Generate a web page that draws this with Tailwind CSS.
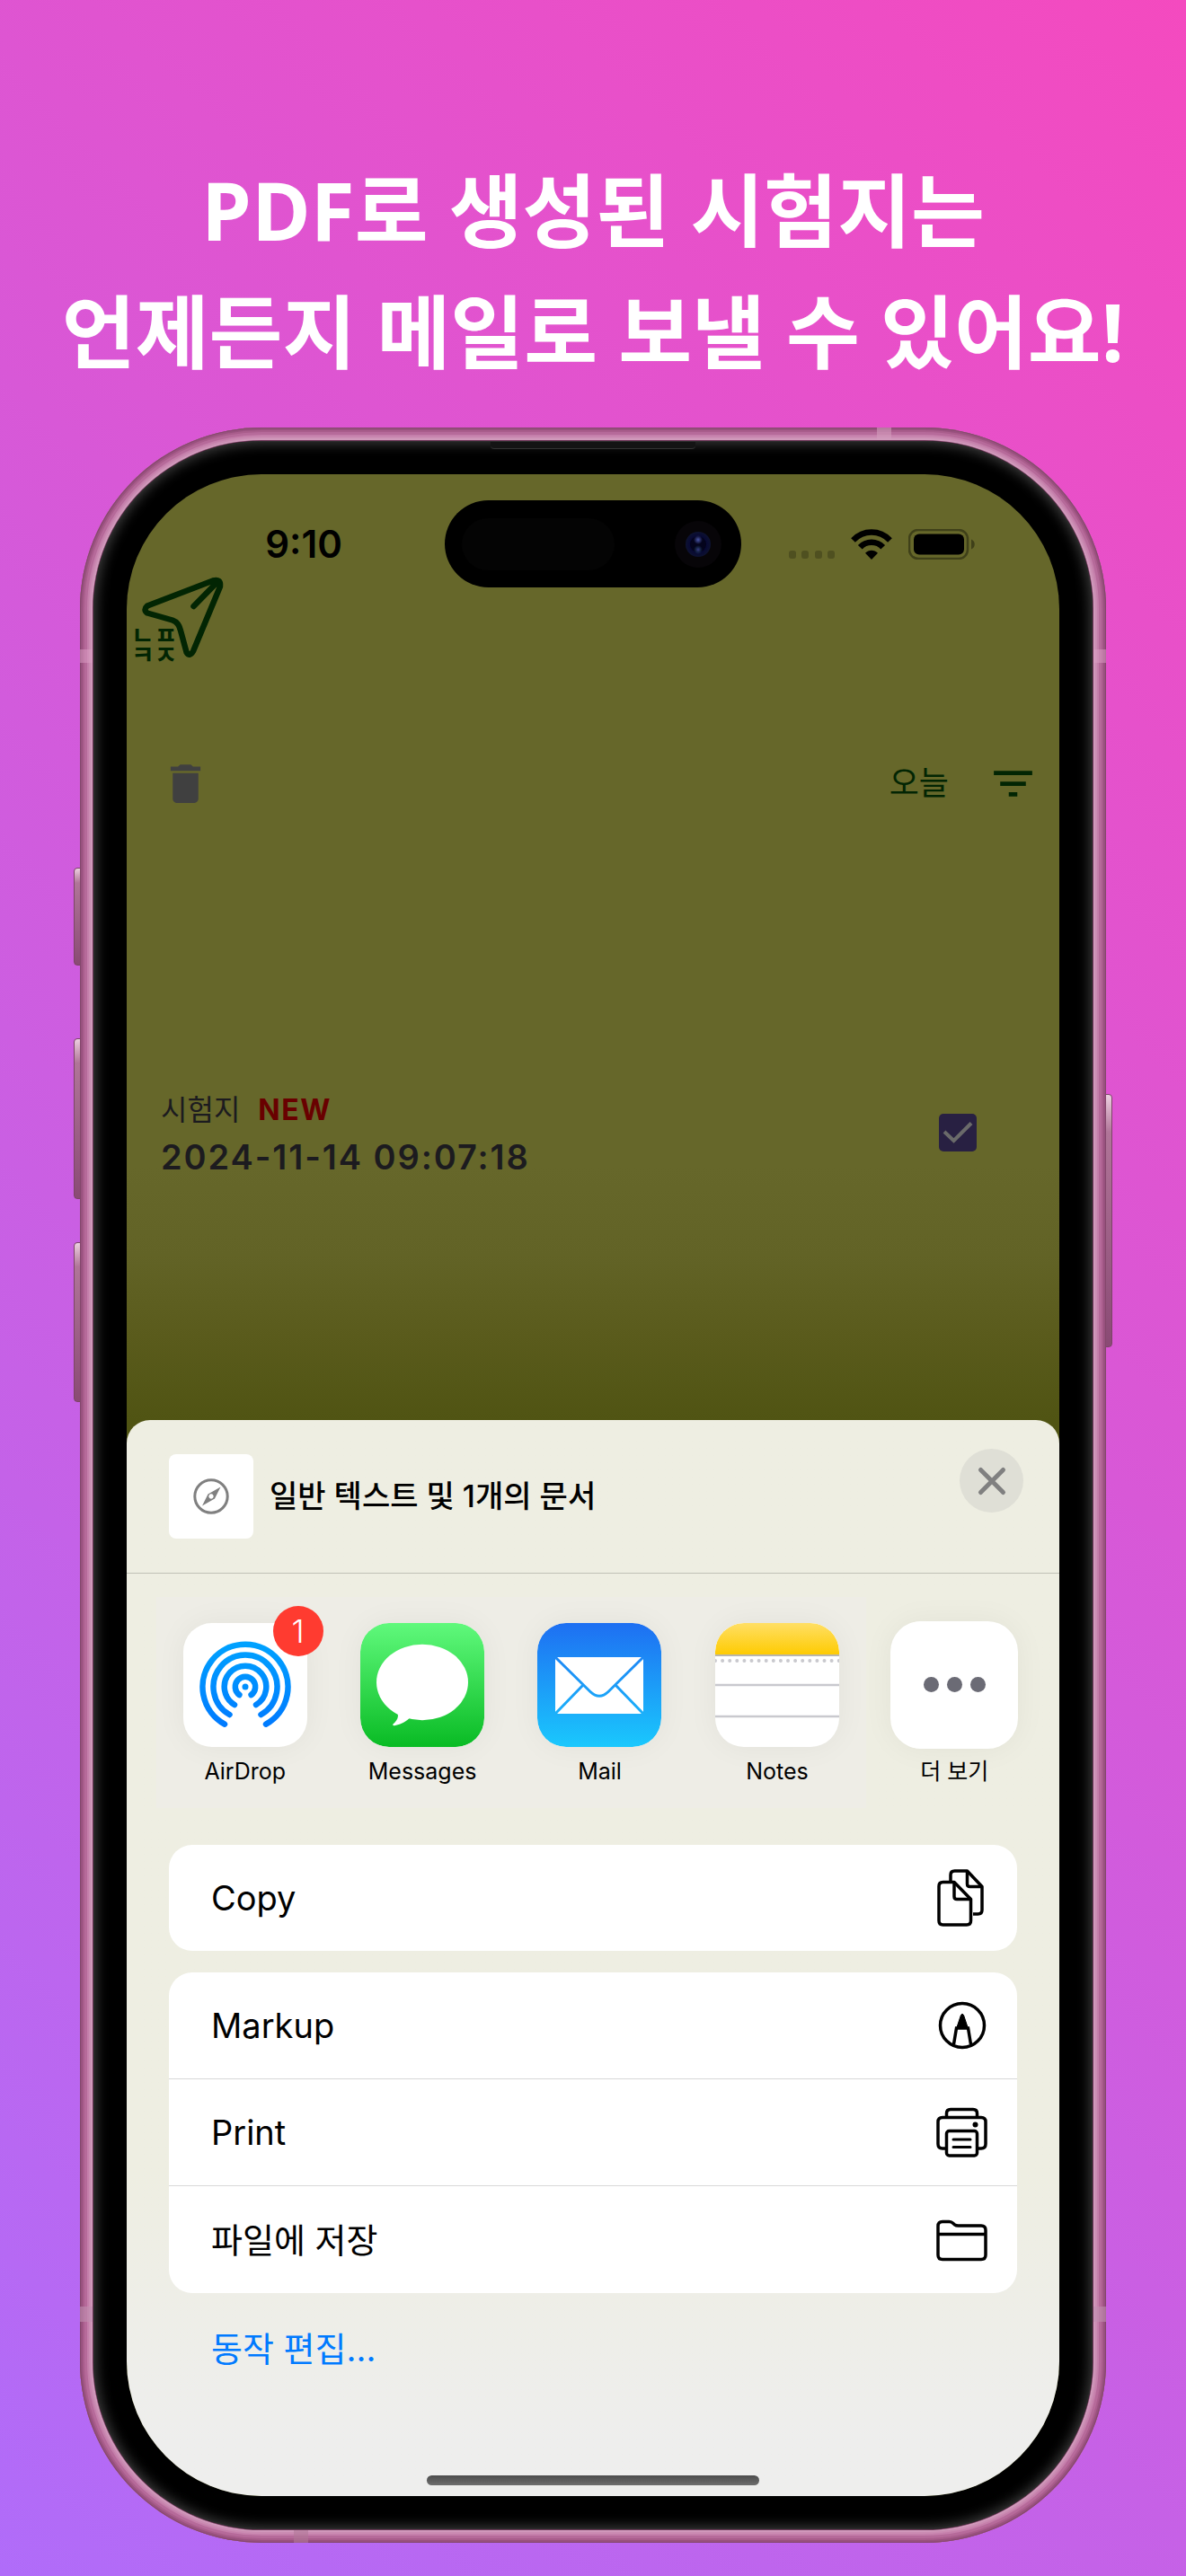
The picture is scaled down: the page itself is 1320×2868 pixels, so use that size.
<!DOCTYPE html>
<html lang="ko">
<head>
<meta charset="utf-8">
<meta name="viewport" content="width=device-width, initial-scale=1">
<title>시험지 메일 보내기</title>
<script src="https://cdn.jsdelivr.net/npm/@tailwindcss/browser@4"></script>
</head>
<body class="min-h-screen bg-[linear-gradient(45deg,#b06cf9,#f44abf)] font-['Inter','Noto_Sans_CJK_KR',sans-serif] text-black">
<main class="flex flex-col px-[89px] pt-[166px] pb-[37px]">
  <h1 class="-mx-[89px] text-center font-['Open_Sans','Noto_Sans_CJK_KR',sans-serif] text-[89px] leading-[135px] font-bold text-white">PDF로 생성된 시험지는<br>언제든지 메일로 보낼 수 있어요!</h1>

  <!-- Phone body -->
  <div class="relative mt-10">
    <!-- Side buttons -->
    <div class="absolute top-[490px] -left-[7px] h-[109px] w-3 rounded-l-sm border border-[#7d4468] bg-linear-to-b from-[#ecd0e0] via-[#b07598] via-15% to-[#8a4a74]"></div>
    <div class="absolute top-[680px] -left-[7px] h-[179px] w-3 rounded-l-sm border border-[#7d4468] bg-linear-to-b from-[#ecd0e0] via-[#b07598] via-15% to-[#8a4a74]"></div>
    <div class="absolute top-[907px] -left-[7px] h-[178px] w-3 rounded-l-sm border border-[#7d4468] bg-linear-to-b from-[#ecd0e0] via-[#b07598] via-15% to-[#8a4a74]"></div>
    <div class="absolute top-[742px] -right-[7px] h-[282px] w-3 rounded-r-sm border border-[#7d4468] bg-linear-to-b from-[#ecd0e0] via-[#b07598] via-15% to-[#8a4a74]"></div>

    <div class="relative rounded-[202px] bg-[#6b3556] p-[15px] shadow-[inset_0_0_0_1px_#84476c,inset_0_0_0_3px_#98517e,inset_0_0_0_5px_#a95d8c,inset_0_0_0_8px_#b66a9a,inset_0_0_0_10px_#c57fab,inset_0_0_0_12px_#cb8cb3,inset_0_0_0_14px_#d099bb]">
      <!-- Antenna bands -->
      <div class="absolute top-[247px] left-0 h-[15px] w-3.5 bg-[#dba0c6]/50"></div>
      <div class="absolute top-[247px] right-0 h-[15px] w-3.5 bg-[#dba0c6]/50"></div>
      <div class="absolute bottom-[246px] left-0 h-[17px] w-3.5 bg-[#c08fb0]/60"></div>
      <div class="absolute right-0 bottom-[246px] h-[17px] w-3.5 bg-[#c08fb0]/60"></div>
      <div class="absolute top-0 right-[239px] h-3.5 w-4 bg-[#d29cbc]/60"></div>
      <div class="absolute bottom-0 left-[238px] h-3.5 w-4 bg-[#b07898]/60"></div>

      <div class="relative rounded-[187px] bg-black p-[37px] shadow-[inset_0_0_0_1px_#2c2c2c,inset_0_0_14px_3px_#3c3c3c]">
        <div class="absolute top-px left-1/2 h-2 w-[228px] -translate-x-1/2 rounded-b-sm border-b border-[#333] bg-[#141414]"></div>

        <!-- Screen -->
        <div class="flex flex-col overflow-hidden rounded-[150px] bg-[linear-gradient(#66672a_0,#66672a_770px,#626326_870px,#5a5b1c_960px,#505413_1053px)]">
          <div class="flex min-h-[1053px] flex-col">
            <div class="mt-[29px] grid grid-cols-[1fr_330px_1fr] items-center">
              <time class="pl-10 text-center text-[42px] leading-[48px] font-semibold">9:10</time>
              <div class="flex h-[97px] items-center justify-between rounded-full bg-black pr-[22px] pl-[19px]">
                <div class="h-[58px] w-[170px] rounded-full bg-[#040404]"></div>
                <svg class="size-[52px]" viewBox="0 0 52 52">
                  <defs>
                    <radialGradient id="lens"><stop offset="0" stop-color="#0d0d5c"/><stop offset=".55" stop-color="#060634"/><stop offset="1" stop-color="#0d1230"/></radialGradient>
                    <radialGradient id="glare"><stop stop-color="#4a56a8"/><stop offset="1" stop-color="#4a56a8" stop-opacity="0"/></radialGradient>
                    <radialGradient id="flare"><stop stop-color="#3b3a8a"/><stop offset="1" stop-color="#1c4a5a" stop-opacity="0"/></radialGradient>
                  </defs>
                  <circle cx="26" cy="26" r="26" fill="#070508"/><circle cx="26" cy="26" r="14" fill="url(#lens)"/>
                  <circle cx="26" cy="26" r="9" fill="#04041c"/><circle cx="26" cy="21" r="5" fill="url(#glare)"/><circle cx="26" cy="32" r="5" fill="url(#flare)"/>
                </svg>
              </div>
              <div class="flex items-center justify-center gap-[18px] pr-10">
                <svg class="mt-6 h-[9px] w-[51px]" viewBox="0 0 51 9" fill="#4f5020"><rect width="8" height="9" rx="3"/><rect x="14" width="8" height="9" rx="3"/><rect x="29" width="8" height="9" rx="3"/><rect x="43" width="8" height="9" rx="3"/></svg>
                <svg class="h-[34px] w-[46px]" viewBox="0 0 46 34" fill="none" stroke="#000" stroke-width="6.5"><path d="M2.5 12.5C14 .6 32 .6 43.500 12.500"/><path d="M10.300 20.300C17 13 29 13 35.700 20.300"/><path d="M23 34L16 26.800C20 22.800 26 22.800 30 26.800Z" fill="#000" stroke="none"/></svg>
                <svg class="h-[34px] w-[75px]" viewBox="0 0 75 34"><rect x="1" y="1" width="65" height="32" rx="10" fill="none" stroke="#3f4019" stroke-width="2.500"/><rect x="6" y="5.500" width="56" height="23" rx="6"/><path d="M70 11.500C75 13.500 75 20.500 70 22.500Z" fill="#3f4019"/></svg>
              </div>
            </div>

            <div class="relative -mt-[13px] ml-2 h-[98px] w-[100px] text-[#022503]">
              <svg class="size-full" viewBox="0 0 100 98" fill="none" stroke="currentColor" stroke-width="6.5" stroke-linecap="round" stroke-linejoin="round">
                <path d="M88 5.500L15 33.500Q10 38 15 41.500L43 49.500Q50 52 52 61L58.500 85Q62 91 66 84L96 12Q97 3 88 5.500ZM90 10L66.500 34"/>
              </svg>
              <p class="absolute top-[54px] -left-[3px] font-['Noto_Sans_CJK_KR',sans-serif] text-[28px] leading-[22px] font-bold">ㄴㅍ<br>ㅋㅈ</p>
            </div>

            <div class="mt-[105px] flex items-center pr-[23px] pl-[37px]">
              <button type="button" aria-label="삭제"><svg class="size-[57px]" viewBox="0 0 24 24" fill="#404040"><path d="M6 19c0 1.100.9 2 2 2h8c1.100 0 2-.9 2-2V7H6v12zM19 4h-3.500l-1-1h-5l-1 1H5v2h14V4z"/></svg></button>
              <button type="button" class="ml-auto text-[36px] leading-[57px] font-normal text-[#022503]">오늘</button>
              <button type="button" aria-label="정렬" class="ml-[43px]"><svg class="size-[57px]" viewBox="0 0 24 24" fill="#022503"><path d="M10 18h4v-2h-4v2zM3 6v2h18V6H3zm3 7h12v-2H6v2z"/></svg></button>
            </div>

            <div class="mt-[308px] flex items-center pr-[92px] pl-[38px]">
              <label for="paper" class="flex grow flex-col text-[#1c1b1f]">
                <span class="flex items-center gap-5 text-[32px] leading-[54px] font-normal">시험지 <strong class="font-bold tracking-wider text-[#690000]">NEW</strong></span>
                <span class="text-[38px] leading-[50px] font-semibold tracking-wider">2024-11-14 09:07:18</span>
              </label>
              <span class="grid size-[42px]">
                <input id="paper" type="checkbox" checked class="col-start-1 row-start-1 size-[42px] appearance-none rounded-[5px] bg-[#282042]">
                <svg class="pointer-events-none col-start-1 row-start-1 size-[42px]" viewBox="0 0 42 42" fill="none" stroke="#6a6a6a" stroke-width="4"><path d="M6 20L16.500 30L36 10.500"/></svg>
              </span>
            </div>
          </div>

          <!-- Share sheet -->
          <section class="flex min-h-[1198px] flex-col rounded-t-[26px] bg-linear-to-b from-[#eeeee2] via-[#eeeee2] via-70% to-[#eeeeed] to-95%">
            <header class="flex h-[171px] border-b border-[#c0c1b6] pr-10 pl-[47px]">
              <div class="mt-[38px] grid size-[94px] place-items-center rounded-lg bg-white">
                <svg class="size-10" viewBox="0 0 40 40" fill="none"><circle cx="20" cy="20" r="18.200" stroke="#808080" stroke-width="3"/><path fill="#808080" fill-rule="evenodd" d="M30.500 9.500L24 22.500L10 30.500L16.500 17.500ZM20 17.300a2.700 2.700 0 1 0 .01 0Z"/></svg>
              </div>
              <h2 class="mt-[38px] ml-[18px] text-[34px] leading-[94px] font-medium">일반 텍스트 및 1개의 문서</h2>
              <button type="button" aria-label="닫기" class="mt-8 ml-auto grid size-[71px] place-items-center rounded-full bg-[#dfdfd6]">
                <svg class="size-[34px]" viewBox="0 0 34 34" stroke="#808080" stroke-width="5" stroke-linecap="round"><path d="M4.500 4.500L29.500 29.500M29.500 4.500L4.500 29.500"/></svg>
              </button>
            </header>

            <ul class="mt-[26px] grid h-[235px] grid-cols-5 pr-[18px] pl-[33px] text-center text-[25px] leading-[34px]">
              <li class="bg-[#eeede6] pt-[29px]"><button type="button" class="flex w-full flex-col items-center gap-2.5">
                <span class="relative rounded-[32px] shadow-[0_0_34px_#0000000d]">
                  <svg class="size-[138px]" viewBox="0 0 138 138"><defs><linearGradient id="air" gradientUnits="userSpaceOnUse" x1="0" y1="22" x2="0" y2="115"><stop stop-color="#00a2ff"/><stop offset="1" stop-color="#007aff"/></linearGradient></defs><rect width="138" height="138" rx="32" fill="#fff"/><g fill="none" stroke="url(#air)" stroke-width="6.500" stroke-linecap="round"><path d="M46 112.700A47.500 47.500 0 1 1 92 112.700"/><path d="M51.500 102A35.500 35.500 0 1 1 86.500 102"/><path d="M57 91A23.300 23.300 0 1 1 81 91"/><path d="M62.400 80A11.200 11.200 0 1 1 75.600 80"/></g><circle cx="69" cy="71" r="3.500" fill="#0090ff"/></svg>
                  <span class="absolute -top-[19px] -right-[18px] size-14 rounded-full bg-[#ff3b30] text-[36px] leading-14 font-light text-white">1</span>
                </span>AirDrop</button></li>
              <li class="bg-[#eeede6] pt-[29px]"><button type="button" class="flex w-full flex-col items-center gap-2.5">
                <svg class="size-[138px] rounded-[32px] shadow-[0_0_34px_#0000000d]" viewBox="0 0 138 138"><defs><linearGradient id="msg" x2="0" y2="1"><stop stop-color="#60f97c"/><stop offset="1" stop-color="#09bb24"/></linearGradient></defs><rect width="138" height="138" rx="32" fill="url(#msg)"/><ellipse cx="69" cy="66" rx="51" ry="42.300" fill="#fff"/><path d="M38 96C44 101 43 107 36.500 112.500C35.500 114 37 114.500 39 114C47 112.500 51 109 56 105Z" fill="#fff"/></svg>Messages</button></li>
              <li class="bg-[#eeede6] pt-[29px]"><button type="button" class="flex w-full flex-col items-center gap-2.5">
                <svg class="size-[138px] rounded-[32px] shadow-[0_0_34px_#0000000d]" viewBox="0 0 138 138"><defs><linearGradient id="mail" gradientUnits="userSpaceOnUse" x1="0" y1="0" x2="0" y2="138"><stop stop-color="#1e6ff2"/><stop offset="1" stop-color="#1ac8fd"/></linearGradient></defs><rect width="138" height="138" rx="32" fill="url(#mail)"/><rect x="20" y="38" width="98" height="63" rx="3" fill="#fff"/><path d="M20 38L59 76.500Q69 86 79 76.500L118 38M20 101L51 69M118 101L87 69" fill="none" stroke="url(#mail)" stroke-width="3"/></svg>Mail</button></li>
              <li class="bg-[#eeede6] pt-[29px]"><button type="button" class="flex w-full flex-col items-center gap-2.5">
                <svg class="size-[138px] rounded-[32px] bg-white shadow-[0_0_34px_#0000000d]" viewBox="0 0 138 138"><defs><linearGradient id="note" x2="0" y2="1"><stop stop-color="#ffdf65"/><stop offset="1" stop-color="#fecb02"/></linearGradient></defs><path d="M0 35V32A32 32 0 0 1 32 0H106A32 32 0 0 1 138 32V35Z" fill="url(#note)"/><path d="M0 36H138" stroke="#b9b6ac" stroke-width="2"/><path d="M0 42H138" stroke="#c9c9ce" stroke-width="4" stroke-linecap="round" stroke-dasharray="0 8.100"/><path d="M0 69H138M0 104H138" stroke="#c9c9ce" stroke-width="2.500"/></svg>Notes</button></li>
              <li class="pt-[27px]"><button type="button" class="flex w-full flex-col items-center gap-2">
                <svg class="size-[142px] rounded-[34px] bg-white shadow-[0_0_34px_#0000000d]" viewBox="0 0 142 142" fill="#6b6b75"><circle cx="45.500" cy="70.500" r="8.500"/><circle cx="71.500" cy="70.500" r="8.500"/><circle cx="97.500" cy="70.500" r="8.500"/></svg>더 보기</button></li>
            </ul>

            <div class="mx-[47px] mt-[41px] flex flex-col gap-6 text-[38px] leading-[48px]">
              <button type="button" class="flex h-[118px] items-center justify-between rounded-[26px] bg-white pr-8 pl-[47px]">Copy
                <svg class="h-[66px] w-[60px]" viewBox="0 0 60 66" fill="none" stroke="#000" stroke-width="3.500" stroke-linejoin="round"><path d="M18 14V7.500Q18 3 22.500 3H36.500L53 20.500V46.500Q53 51 48.500 51H43"/><path d="M36.500 3V17.500Q36.500 20.500 39.500 20.500H53"/><path d="M9.500 15.500H22L40.500 34.500V58.500Q40.500 63 36 63H9.500Q5 63 5 58.500V20Q5 15.500 9.500 15.500Z"/><path d="M22 15.500V31.500Q22 34.500 25 34.500H40.500"/></svg>
              </button>
              <div class="flex flex-col divide-y divide-[#d8d8d8] rounded-[26px] bg-white">
                <button type="button" class="flex h-[119px] items-center justify-between pr-8 pl-[47px]">Markup
                  <svg class="size-[60px]" viewBox="0 0 60 60" fill="none" stroke="#000" stroke-width="3.500"><circle cx="31" cy="30" r="24.500"/><path d="M21.500 51L24.500 33H37.500L40.500 51"/><path d="M24.500 33.500L29.500 18.500Q31 16 32.500 18.500L37.500 33.500Z" fill="#000" stroke-width="1"/></svg>
                </button>
                <button type="button" class="flex h-[119px] items-center justify-between pr-8 pl-[47px]">Print
                  <svg class="size-[60px]" viewBox="0 0 60 60" fill="none" stroke="#000" stroke-width="3.500" stroke-linecap="round"><path d="M13.500 13V9Q13.500 4.500 18 4.500H43Q47.500 4.500 47.500 9V13"/><path d="M13 48H9Q4 48 4 43V18.500Q4 13.500 9 13.500H52Q57 13.500 57 18.500V43Q57 48 52 48H48"/><rect x="13.500" y="28.500" width="34" height="27.500" rx="3"/><path d="M21 38H40M21 46.500H40" stroke-width="3"/><circle cx="45.500" cy="21.500" r="3" fill="#000" stroke="none"/></svg>
                </button>
                <button type="button" class="flex h-[119px] items-center justify-between pr-8 pl-[47px]">파일에 저장
                  <svg class="size-[60px]" viewBox="0 0 60 60" fill="none" stroke="#000" stroke-width="3.500"><path d="M4 14.500Q4 9.500 9 9.500H16.500Q19 9.500 21 11.500L22.500 12.800Q24 14 26.500 14H52Q57 14 57 19V46.500Q57 51.500 52 51.500H9Q4 51.500 4 46.500ZM4 23.500H57"/></svg>
                </button>
              </div>
            </div>
            <a href="#" class="mt-9 ml-[94px] self-start text-[38px] leading-[52px] text-[#007aff]">동작 편집...</a>
            <div class="mx-auto mt-auto mb-3 h-[11px] w-[370px] rounded-full bg-linear-to-b from-[#4c4c4c] to-[#6e6e6e]"></div>
          </section>
        </div>
      </div>
    </div>
  </div>
</main>
</body>
</html>
